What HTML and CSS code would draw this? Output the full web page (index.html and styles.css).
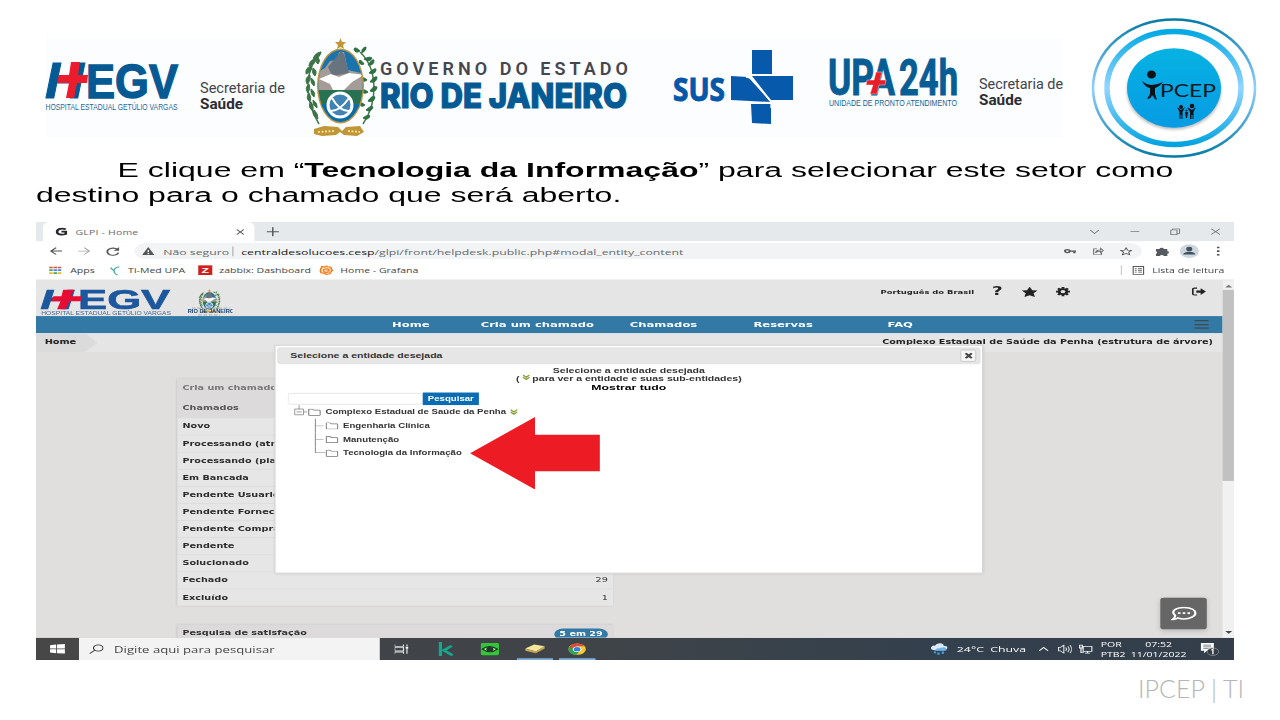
FILE: index.html
```html
<!DOCTYPE html>
<html lang="pt-BR">
<head>
<meta charset="utf-8">
<title>IPCEP | TI</title>
<link rel="stylesheet" href="styles.css">
</head>
<body>
<header class="logos">
  <svg class="logo" width="190" height="155" viewBox="0 0 190 155">
    <path fill="#fcfdff" d="M46 37h144v101H46z"/>
    <g class="arial" font-weight="700" fill="#055a94" stroke="#055a94">
      <text x="45" y="98" font-size="50" font-style="italic" textLength="39" lengthAdjust="spacingAndGlyphs" stroke-width="1">H</text>
      <text x="86" y="98" font-size="49" textLength="92" lengthAdjust="spacingAndGlyphs" stroke-width="1.4">EGV</text>
    </g>
    <path fill="#ec1c2d" d="M71 62h9l-2 13h10l-1 8H77l-3 15h-8l3-15H57l2-8h10z"/>
    <text class="arial" x="45.500" y="109.500" font-size="8.500" fill="#23679c" textLength="132" lengthAdjust="spacingAndGlyphs">HOSPITAL ESTADUAL GETÚLIO VARGAS</text>
  </svg>
  <svg class="logo" width="105" height="155" viewBox="190 0 105 155">
    <path fill="#fcfdff" d="M190 37h105v101H190z"/>
    <g class="roboto" fill="#414349">
      <text x="200" y="93" font-size="15" textLength="85" lengthAdjust="spacingAndGlyphs">Secretaria de</text>
      <text x="200" y="109" font-size="15" font-weight="700" fill="#2c2c32" textLength="43" lengthAdjust="spacingAndGlyphs">Saúde</text>
    </g>
  </svg>
  <svg class="logo" width="345" height="155" viewBox="295 0 345 155">
    <path fill="#fcfdff" d="M295 37h345v101H295z"/>
    <defs>
      <clipPath id="shield"><ellipse cx="340.500" cy="86" rx="22" ry="36"/></clipPath>
      <g id="crest">
        <path d="M321 52C305 68 303 98 319 124M360 52c17 16 19 48 3 72" fill="none" stroke="#46794a" stroke-width="1.500"/>
        <path d="M321 52q-7 1-8 8 7-2 8-8M316 59q-7 1-7 7 6-1 7-7M312 66q-7 1-6 8 6-2 6-8M310 75q-6 3-3 9 4-3 3-9M309 84q-5 4-1 9 3-5 1-9M309 93q-4 5 1 9 2-5-1-9M311 102q-4 5 2 9 1-6-2-9M314 110q-3 5 4 9 0-6-4-9M318 57q3 4 0 7-4-3 0-7M313 68q5 3 2 8-4-3-2-8M311 78q5 3 3 8-4-3-3-8M311 89q5 3 3 8-4-3-3-8M313 100q5 3 4 8-5-3-4-8" fill="#3d7446" stroke="#3d7446"/>
        <path d="M360 51q-5-5-6-2 1 5 6 2M362 53q5-3 4-6-5 1-4 6M364 59q6-3 8-1-2 5-8 1M368 65q4-6 6-5 0 6-6 5M369 73q5-5 7-4 0 6-7 4M370 82q4-6 7-5 0 6-7 5M370 91q4-6 7-4-1 6-7 4M368 101q4-6 7-4-1 6-7 4M366 110q5-5 7-3-2 6-7 3M363 118q5-4 7-2-2 5-7 2M364 64q-3-5-5-3 1 5 5 3M367 80q-4-4-6-1 2 4 6 1M368 92q-5-4-6-1 2 4 6 1M365 105q-5-4-5-1 1 4 5 1" fill="#2d7041" stroke="#2d7041"/>
        <ellipse cx="340.500" cy="86" rx="23.500" ry="37.500" fill="#b99642"/>
        <g clip-path="url(#shield)">
          <path fill="#1973ad" d="M315 48h52v45h-52z"/>
          <path fill="#a39c98" d="M315 74l10-6 5-7 7-1 2-8h5l4 18 17 4v22h-50z"/>
          <path fill="#67747f" d="M337 56l4-5 3 3 5 19-17 3-4-9z"/>
          <path fill="#287153" d="M315 90h52v18h-52z"/>
          <path fill="#076ca9" d="M315 104h52v20h-52z"/>
          <path fill="#fff" d="M319 79l12-5 8 3 10-4 15 2-12 7-8 8h-11l-3-6z"/>
        </g>
        <circle cx="340" cy="105" r="12" fill="#4183b4" stroke="#fff" stroke-width="3"/>
        <path d="M332 98q8 14 18 13M349 98q-9 13-18 13" fill="none" stroke="#fff" stroke-width="2"/>
        <path fill="#c09636" d="M340.500 38l1.500 4h4l-3 3 1 4-3.500-2-3.500 2 1-4-3-3h4zM314 129l10-3 14 1 4 4 4-4 14-1 4 6-7 4-13-1-4-3-4 3-14 1-8-2z"/>
        <path stroke="#f3df9b" stroke-width="2" stroke-dasharray="2 1.500" fill="none" d="M318 132l16-1M348 131l12 1"/>
      </g>
    </defs>
    <use href="#crest"/>
    <text class="roboto" x="380" y="75" font-size="18" font-weight="600" fill="#45464e" textLength="248" lengthAdjust="spacing">GOVERNO DO ESTADO</text>
    <text class="inter" x="380" y="108" font-size="34" font-weight="800" fill="#055a94" stroke="#055a94" stroke-width="1.200" textLength="247" lengthAdjust="spacingAndGlyphs">RIO DE JANEIRO</text>
  </svg>
  <svg class="logo" width="170" height="155" viewBox="640 0 170 155">
    <path fill="#fcfdff" d="M640 37h170v101H640z"/>
    <text class="noto" x="673" y="101" font-size="33" font-weight="700" fill="#0557a8" stroke="#0557a8" textLength="52" lengthAdjust="spacingAndGlyphs">SUS</text>
    <path fill="#0759ab" d="M752 50h20v24h-20zM731 76l17 1 23 25-40-2zM752 76h41v24h-22zM751 104h20v20l-19-1z"/>
    <path stroke="#fff" stroke-width="1.300" fill="none" d="M746 77l5 1 20 24v6"/>
  </svg>
  <svg class="logo" width="155" height="155" viewBox="810 0 155 155">
    <path fill="#fcfdff" d="M810 37h155v101H810z"/>
    <g class="roboto" fill="#075d94" stroke="#075d94" font-weight="700" font-size="50">
      <text x="828" y="95" textLength="67" lengthAdjust="spacingAndGlyphs">UPA</text>
      <text x="899" y="95" textLength="59" lengthAdjust="spacingAndGlyphs">24h</text>
    </g>
    <path fill="#e91e2b" stroke="#fff" stroke-width=".4" d="M876 72h6l-2 8h6l-1 5h-6l-2 9h-7l3-9h-7l1-5h7z"/>
    <text class="arial" x="829" y="106" font-size="9.500" fill="#126496" textLength="128" lengthAdjust="spacingAndGlyphs">UNIDADE DE PRONTO ATENDIMENTO</text>
  </svg>
  <svg class="logo" width="110" height="155" viewBox="965 0 110 155">
    <path fill="#fcfdff" d="M965 37h98v101h-98z"/>
    <g class="roboto" fill="#414349">
      <text x="979" y="89" font-size="15" textLength="84" lengthAdjust="spacingAndGlyphs">Secretaria de</text>
      <text x="979" y="105" font-size="15" font-weight="700" fill="#2c2c32" textLength="43" lengthAdjust="spacingAndGlyphs">Saúde</text>
    </g>
  </svg>
  <svg class="logo ipcep" width="205" height="155" viewBox="1075 0 205 155">
    <defs>
      <linearGradient id="ring" x2="0" y2="1"><stop stop-color="#067ba6"/><stop offset=".5" stop-color="#91d1ff"/><stop offset="1" stop-color="#067ba6"/></linearGradient>
      <linearGradient id="band" x2="0" y2="1"><stop stop-color="#05a9e4"/><stop offset=".5" stop-color="#94d5ff"/><stop offset="1" stop-color="#05a4e0"/></linearGradient>
      <linearGradient id="disc" x2="0" y2="1"><stop stop-color="#06b2e2"/><stop offset="1" stop-color="#079be4"/></linearGradient>
      <filter id="soft"><feGaussianBlur stdDeviation="1.500"/></filter>
    </defs>
    <ellipse cx="1174" cy="88" rx="81" ry="68.500" fill="none" stroke="url(#ring)" stroke-width="2.600"/>
    <ellipse cx="1174" cy="88" rx="67" ry="56.500" fill="none" stroke="url(#band)" stroke-width="5.500"/>
    <ellipse cx="1174" cy="91" rx="47" ry="38.500" fill="#888" filter="url(#soft)" opacity=".6"/>
    <ellipse cx="1174" cy="88" rx="47" ry="39.700" fill="url(#disc)"/>
    <g fill="#0b1116">
      <ellipse cx="1151.500" cy="74.500" rx="4.500" ry="4"/>
      <path d="M1142 81q5 4 10 4t11-3q-4 5-8 6v6l2 6-2-1-3-4q-1 4-5 4l3-5v-6q-5-1-8-7z"/>
      <circle cx="1181" cy="107" r="2"/><circle cx="1192" cy="106" r="2.300"/><circle cx="1186.500" cy="110.500" r="1"/>
      <path d="M1177 107l4 3 4-3-2.500 5v7h-1v-4h-1v4h-1v-7zM1187 107l5 3 4-3-2.500 5v7h-1v-4h-1v4h-1.500v-7zM1185 112h3l-1 6h-1z"/>
    </g>
    <text class="lato" x="1160" y="97" font-size="18" fill="#101820" textLength="56" lengthAdjust="spacingAndGlyphs">PCEP</text>
  </svg>
</header>

<p class="lead"><span class="first">E clique em “<b>Tecnologia da Informação</b>” para selecionar este setor como</span><br>destino para o chamado que será aberto.</p>

<main class="capture">
<div class="screen">
  <div class="tabstrip">
    <div class="tab">
      <svg width="14" height="16" viewBox="0 0 14 16"><path d="M12 4C8 1 2 3 2 8s5 6 10 4V8H7" fill="none" stroke="#26282c" stroke-width="3"/></svg>
      <span class="tab-title">GLPI - Home</span>
      <svg class="tab-close" width="10" height="12" viewBox="0 0 10 12"><path d="M1 2l8 9M9 2l-8 9" stroke="#555" stroke-width="1.500"/></svg>
    </div>
    <svg class="newtab" width="14" height="18" viewBox="0 0 14 18"><path d="M7 1v16M0 9h14" stroke="#555" stroke-width="1.700"/></svg>
    <div class="winctl">
      <svg viewBox="0 0 12 12"><path d="M1 3l5 6 5-6"/></svg>
      <svg viewBox="0 0 12 12"><path d="M1 6h10"/></svg>
      <svg viewBox="0 0 12 12"><path d="M1 3h7v8H1zM3 3V1h8v8H8"/></svg>
      <svg viewBox="0 0 12 12"><path d="M1 1l10 10M11 1L1 11"/></svg>
    </div>
  </div>

  <div class="toolbar">
    <svg class="i14" viewBox="0 0 14 14"><path d="M14 7H1M7 1L1 7l6 6" fill="none" stroke="#555" stroke-width="1.700"/></svg>
    <svg class="i14 fwd" viewBox="0 0 14 14"><path d="M0 7h13M7 1l6 6-6 6" fill="none" stroke="#aaa" stroke-width="1.500"/></svg>
    <svg class="i14 reload" viewBox="0 0 14 14"><path d="M12 4a6 6 0 1 0 1 5" fill="none" stroke="#555" stroke-width="2"/><path fill="#555" d="M14 0v6H8z"/></svg>
    <div class="omnibox">
      <svg width="14" height="16" viewBox="0 0 14 16"><path fill="#555" d="M7 1l7 14H0z"/><path stroke="#fff" stroke-width="1.500" d="M7 6v4M7 11.500v2"/></svg>
      <span class="insecure">Não seguro</span><i class="sep"></i><span class="url"><b>centraldesolucoes.cesp</b>/glpi/front/helpdesk.public.php#modal_entity_content</span>
      <span class="omni-icons">
        <svg width="14" height="14" viewBox="0 0 14 14"><circle cx="4" cy="7" r="2.700" fill="none" stroke="#555" stroke-width="2.200"/><path d="M7 7h7M12 7v4" stroke="#555" stroke-width="2.400"/></svg>
        <svg width="14" height="16" viewBox="0 0 14 16"><path d="M6 4H2v10h9v-3M4 11q1-5 6-5V3l3 4-3 4V8q-4 0-6 3z" fill="none" stroke="#666" stroke-width="1.200"/></svg>
        <svg width="14" height="16" viewBox="0 0 24 24"><path d="M12 2l3 7 8 .8-6 5.500L19 23l-7-4-7 4 2-7.700L1 9.800 9 9z" fill="none" stroke="#555" stroke-width="2"/></svg>
      </span>
    </div>
    <svg class="ext" width="16" height="17" viewBox="0 0 16 16"><path fill="#555a60" d="M1 4h4a2.500 2.500 0 1 1 5 0h4v4a2 2 0 1 1 0 4v4h-4a2.300 2.300 0 0 0-4.500 0H1v-4a2.200 2.200 0 0 0 0-4z"/></svg>
    <svg class="avatar" width="22" height="26" viewBox="0 0 22 26"><ellipse cx="11" cy="13" rx="11" ry="12" fill="#ced6df"/><ellipse cx="11" cy="9.500" rx="3.500" ry="4" fill="#43515f"/><path fill="#43515f" d="M4 19q1-5 7-5t7 5z"/></svg>
    <svg class="dots" width="4" height="16" viewBox="0 0 4 16"><path d="M2 0v3M2 6.500v3M2 13v3" stroke="#555" stroke-width="3"/></svg>
  </div>

  <div class="bookmarks">
    <svg width="14" height="14" viewBox="0 0 14 14"><path fill="#e04d3d" d="M0 0h4v3H0zM5 0h4v3H5zM10 0h4v3h-4z"/><path fill="#47a45a" d="M0 5h4v3H0z"/><path fill="#4285f4" d="M5 5h4v3H5zM10 5h4v3h-4z"/><path fill="#f2b329" d="M0 10h4v3H0zM10 10h4v3h-4z"/><path fill="#47a45a" d="M5 10h4v3H5z"/></svg>
    <span class="bm apps">Apps</span>
    <svg width="12" height="16" viewBox="0 0 12 16"><path d="M1 3l4 6q0 5 4 7M5 8q1-6 6-6" fill="none" stroke="#46ad9e" stroke-width="1.700"/></svg>
    <span class="bm timed">Ti-Med UPA</span>
    <span class="zabbix">Z</span>
    <span class="bm zab">zabbix: Dashboard</span>
    <svg width="16" height="18" viewBox="0 0 16 18"><path d="M8 1l2 2 3 0 1 4 1 2-2 3-1 3-4 1-3-2-3-1-1-4 1-3 1-4 3 1z" fill="#ffe0b0" stroke="#f07a29" stroke-width="1.800"/><path d="M11 12q-5 2-6-2t4-4q3 1 2 4H8" fill="none" stroke="#ef7c2b" stroke-width="1.600"/></svg>
    <span class="bm graf">Home - Grafana</span>
    <span class="reading"><svg width="14" height="16" viewBox="0 0 14 16"><path d="M1 1h12v14H1zM3 5h2M6.500 5H11M3 8h2M6.500 8H11M3 11h2M6.500 11H11" fill="none" stroke="#555" stroke-width="1.400"/></svg><span>Lista de leitura</span></span>
  </div>

  <div class="page">
    <div class="content">
      <div class="apphead">
        <svg width="224" height="63" viewBox="0 0 224 63">
          <g class="arial" font-weight="700" fill="#1d579d" stroke="#1d579d">
            <text x="5" y="51" font-size="48" font-style="italic" textLength="38" lengthAdjust="spacingAndGlyphs">H</text>
            <text x="48" y="51" font-size="47" textLength="105" lengthAdjust="spacingAndGlyphs">EGV</text>
          </g>
          <path fill="#e60c34" d="M31 17h12l-3 11h12l-1 9H38l-4 14H24l4-14H17l3-9h9z"/>
          <text class="arial" x="6" y="61" font-size="10" fill="#43699c" textLength="148" lengthAdjust="spacingAndGlyphs">HOSPITAL ESTADUAL GETÚLIO VARGAS</text>
          <use href="#crest" transform="translate(82 0) scale(.34 .42)"/>
          <text class="arial" x="173" y="58" font-size="10" font-weight="700" fill="#163f79" textLength="53" lengthAdjust="spacingAndGlyphs">RIO DE JANEIRO</text>
          <path d="M178 49h43M185 61h25" stroke="#899" stroke-dasharray="4 2"/>
        </svg>
        <span class="lang">Português do Brasil</span>
        <span class="help">?</span>
        <svg class="fav" width="18" height="19" viewBox="0 0 24 24"><path fill="#222" d="M12 0l4 8 8 1-6 6 2 9-8-4-8 4 2-9-6-6 8-1z"/></svg>
        <svg class="gear" width="16" height="20" viewBox="0 0 20 20"><circle cx="10" cy="10" r="5.500" fill="none" stroke="#222" stroke-width="4"/><path d="M10 0v4M10 16v4M0 10h3M17 10h3M3 3l3 3M14 14l3 3M17 3l-3 3M6 14l-3 3" stroke="#222" stroke-width="4"/></svg>
        <svg class="logout" width="16" height="16" viewBox="0 0 16 16"><path d="M6 2H3q-2 0-2 2v8q0 2 2 2h3" fill="none" stroke="#222" stroke-width="2"/><path fill="#222" d="M5 6h5V2l6 6-6 6v-4H5z"/></svg>
      </div>
      <nav class="menu"><span class="m1">Home</span><span class="m2">Cria um chamado</span><span class="m3">Chamados</span><span class="m4">Reservas</span><span class="m5">FAQ</span><i class="burger"></i></nav>
      <div class="crumbs"><span class="crumb">Home</span><span class="entity">Complexo Estadual de Saúde da Penha (estrutura de árvore)</span></div>
      <div class="tickets">
        <div class="hrow create">Cria um chamado</div>
        <div class="hrow">Chamados</div>
        <div class="row">Novo</div>
        <div class="row">Processando (atribuído)</div>
        <div class="row">Processando (planejado)</div>
        <div class="row">Em Bancada</div>
        <div class="row">Pendente Usuario</div>
        <div class="row">Pendente Fornecedor</div>
        <div class="row">Pendente Compras</div>
        <div class="row">Pendente</div>
        <div class="row">Solucionado</div>
        <div class="row">Fechado<span>29</span></div>
        <div class="row">Excluído<span>1</span></div>
      </div>
      <div class="survey"><span>Pesquisa de satisfação</span><span class="pill">5 em 29</span></div>
      <div class="chat"><svg width="30" height="26" viewBox="0 0 30 26"><path d="M5 16C-1 8 6 2 15 2s13 5 13 10-6 10-13 10q-4 0-7-2-2 3-6 3 3-3 3-7z" fill="none" stroke="#fff" stroke-width="2.500"/><path d="M8 12h3M13.500 12h3M19 12h3" stroke="#fff" stroke-width="3"/></svg></div>
    </div>
    <div class="scroll"><i class="up"></i><i class="thumb"></i><i class="down"></i></div>

    <section class="modal">
      <div class="mtitle"><span>Selecione a entidade desejada</span><span class="mclose"><svg width="9" height="11" viewBox="0 0 9 11"><path d="M1 1l7 9M8 1l-7 9" stroke="#444" stroke-width="3"/></svg></span></div>
      <div class="mintro">
        <div>Selecione a entidade desejada</div>
        <div>( <svg class="chev" width="8" height="11" viewBox="0 0 8 11"><path d="M0 1l4 4 4-4M0 5l4 4 4-4" fill="none" stroke="#8aa33d" stroke-width="2"/></svg> para ver a entidade e suas sub-entidades)</div>
        <div class="all">Mostrar tudo</div>
      </div>
      <div class="msearch"><span class="field"></span><span class="btn">Pesquisar</span></div>
      <div class="tree">
        <div class="node root"><svg width="16" height="24" viewBox="0 0 16 24"><path d="M7 0v7M2 7h10v10H2zM4 12h6M12 12h4" fill="none" stroke="#777"/></svg><svg class="folder" viewBox="0 0 15 13"><path d="M1 2q0-1 1-1h3l2 2h6q1 0 1 1v7q0 1-1 1H2q-1 0-1-1z"/></svg><span>Complexo Estadual de Saúde da Penha</span><svg class="chev" width="8" height="11" viewBox="0 0 8 11"><path d="M0 1l4 4 4-4M0 5l4 4 4-4" fill="none" stroke="#8aa33d" stroke-width="2"/></svg></div>
        <div class="node"><i class="branch"></i><svg class="folder" viewBox="0 0 15 13"><path d="M1 2q0-1 1-1h3l2 2h6q1 0 1 1v7q0 1-1 1H2q-1 0-1-1z"/></svg><span>Engenharia Clínica</span></div>
        <div class="node"><i class="branch"></i><svg class="folder" viewBox="0 0 15 13"><path d="M1 2q0-1 1-1h3l2 2h6q1 0 1 1v7q0 1-1 1H2q-1 0-1-1z"/></svg><span>Manutenção</span></div>
        <div class="node last"><i class="branch"></i><svg class="folder" viewBox="0 0 15 13"><path d="M1 2q0-1 1-1h3l2 2h6q1 0 1 1v7q0 1-1 1H2q-1 0-1-1z"/></svg><span>Tecnologia da Informação</span></div>
      </div>
      <svg class="arrow" width="148" height="127" viewBox="0 0 148 127"><path fill="#ed1c24" d="M0 63.500L74 0v31h74v64H74v32z"/></svg>
    </section>
  </div>

  <div class="taskbar">
    <div class="start"><svg width="17" height="17" viewBox="0 0 17 17"><path fill="#fff" d="M0 2l7-1v7H0zM8 1l9-1v8H8zM0 9h7v7l-7-1zM8 9h9v8l-9-1z"/></svg></div>
    <div class="search"><svg width="16" height="18" viewBox="0 0 16 18"><circle cx="10" cy="7" r="5.500" fill="none" stroke="#333" stroke-width="1.300"/><path d="M6 11l-6 6" stroke="#333" stroke-width="1.500"/></svg><span>Digite aqui para pesquisar</span></div>
    <div class="pinned">
      <span><svg width="16" height="18" viewBox="0 0 16 18"><path d="M0 1v3h10V1M0 17v-3h10v3M0 6h10v6H0zM14 1v3M14 7v10" fill="none" stroke="#ddd" stroke-width="1.400"/><path d="M12.500 5h3v3h-3z" fill="#fff"/></svg></span>
      <span><svg width="17" height="25" viewBox="0 0 17 25"><path d="M2 0v25M15 7L6 15l10 9" fill="none" stroke="#16a58d" stroke-width="4"/></svg></span>
      <span><svg width="21" height="22" viewBox="0 0 21 22"><rect width="21" height="22" rx="3" fill="#35c43a"/><path d="M2 11q8-9 17 0-8 9-17 0z" fill="#c8e8c0" stroke="#173c19" stroke-width="2"/><circle cx="10.500" cy="11" r="4" fill="#203b25"/></svg></span>
      <span class="open"><svg width="24" height="20" viewBox="0 0 24 20"><path fill="#f5e69a" d="M1 9l10-7 12 3-10 9z"/><path fill="#c3a955" d="M1 9v4l12 4v-3zM13 14l10-9v4l-10 8z"/></svg></span>
      <span class="open"><svg width="20" height="22" viewBox="0 0 20 20"><circle cx="10" cy="10" r="10" fill="#f7c92e"/><path fill="#dd4b39" d="M1.300 5A10 10 0 0 1 18.700 5H10L6 12z"/><path fill="#32a350" d="M1.300 5A10 10 0 0 0 9 20l5-8-4 2z"/><circle cx="10" cy="10" r="4.800" fill="#fff"/><circle cx="10" cy="10" r="3.800" fill="#3a7ddd"/></svg></span>
    </div>
    <div class="tray">
      <svg width="20" height="24" viewBox="0 0 20 24"><path fill="#dceaf8" d="M4 14q-5-1-3-6 2-3 4-2 2-6 8-4 2 1 2 4 5 0 4 5-1 3-4 3z"/><path fill="#6eb5ec" d="M6 15q-1-5 5-5 5-3 7 1 1 4-3 4z"/><path d="M5 16v3M9 18v4M14 16v4" stroke="#46a6ec" stroke-width="2.500"/></svg>
      <span class="weather">24°C&nbsp; Chuva</span>
      <svg class="caret" width="12" height="10" viewBox="0 0 12 10"><path d="M1 8l5-6 5 6" fill="none" stroke="#fff" stroke-width="1.400"/></svg>
      <svg class="vol" width="16" height="16" viewBox="0 0 16 16"><path d="M1 5h2l4-4v14l-4-4H1zM9 5q2 3 0 6M11.500 3q3 5 0 10M14 1q4 7 0 14" fill="none" stroke="#eee" stroke-width="1.200"/></svg>
      <svg class="net" width="16" height="18" viewBox="0 0 16 18"><path d="M5 4h10v9H5zM7 16h6M10 13v3M1 2h3v5H1zM2.500 7v8H6" fill="none" stroke="#eee" stroke-width="1.400"/></svg>
      <span class="stack kb"><span>POR</span><span>PTB2</span></span>
      <span class="stack clock"><span>07:52</span><span>11/01/2022</span></span>
      <svg class="notif" width="22" height="26" viewBox="0 0 22 26"><path fill="#fff" d="M0 2h15v14H7l-3 4v-4H0z"/><path d="M3 6h9M3 9h9M3 12h6" stroke="#59636e"/><circle cx="14" cy="17.500" r="6.500" fill="#333b45" stroke="#999"/><path d="M12 15l2-2v9" fill="none" stroke="#fff" stroke-width="1.500"/></svg>
    </div>
  </div>
</div>
</main>
<footer class="foot"><span>IPCEP | TI</span></footer>
</body>
</html>
```
FILE: styles.css
```css
* { box-sizing: border-box; }
body { margin: 0; width: 1280px; height: 720px; overflow: hidden; background: #fff; font-family: "Liberation Sans", Arial, sans-serif; }
svg { display: block; flex: none; }
.arial { font-family: "Liberation Sans", sans-serif; }
.roboto { font-family: Roboto, sans-serif; }
.inter { font-family: Inter, sans-serif; }
.noto { font-family: "Noto Sans", sans-serif; }
.lato { font-family: Lato, sans-serif; }

.logos { display: flex; height: 158px; }
.ipcep { overflow: visible; }

.lead { margin: 0 0 0 36px; height: 64px; width: 760px; font-size: 20px; line-height: 25px; color: #000; white-space: nowrap; transform: scaleX(1.6); transform-origin: 0 0; }
.first { padding-left: 51px; }

.capture { margin-left: 36px; width: 1198px; height: 438px; overflow: hidden; }
.screen { width: 1366px; height: 768px; display: flex; flex-direction: column; transform: scale(.877, .5703); transform-origin: 0 0; font-family: "Open Sans", "Noto Sans", sans-serif; }

.tabstrip { height: 34px; flex: none; background: #e5e9ec; display: flex; align-items: center; padding-left: 8px; }
.tab { width: 241px; height: 34px; background: #fff; border-radius: 8px 8px 0 0; display: flex; align-items: center; padding: 0 11px 0 14px; }
.tab-title { margin-left: 9px; font-size: 12px; color: #66696d; letter-spacing: .2px; }
.tab-close { margin-left: auto; }
.newtab { margin-left: 14px; }
.winctl { margin-left: auto; margin-right: 15px; display: flex; gap: 34px; }
.winctl svg { width: 12px; height: 12px; fill: none; stroke: #777; stroke-width: 1.200; }

.toolbar { height: 34px; flex: none; background: #fff; display: flex; align-items: center; padding-left: 16px; }
.i14 { width: 14px; height: 14px; }
.fwd { margin-left: 18px; }
.reload { margin-left: 18px; width: 15px; height: 15px; }
.omnibox { margin-left: 17px; width: 1149px; height: 28px; border-radius: 14px; background: #f1f3f4; display: flex; align-items: center; padding: 0 11px 0 9px; font-size: 14px; color: #66696d; white-space: nowrap; }
.insecure { margin-left: 10px; width: 74px; }
.sep { width: 1px; height: 17px; background: #999; margin-left: 5px; margin-right: 9px; }
.url b { font-weight: 400; color: #222; }
.omni-icons { margin-left: auto; display: flex; gap: 18px; align-items: center; }
.ext { margin-left: 15px; }
.avatar { margin-left: 12px; }
.dots { margin-left: 20px; }

.bookmarks { height: 34px; flex: none; background: #fff; border-bottom: 1px solid #d9dadb; display: flex; align-items: center; padding-left: 15px; font-size: 12px; color: #44474b; white-space: nowrap; }
.bm.apps { margin-left: 10px; width: 45px; }
.bm.timed { margin-left: 9px; width: 80px; }
.zabbix { width: 16px; height: 17px; background: #cf1f1f; color: #fff; font: 700 14px/17px "Liberation Sans", sans-serif; text-align: center; }
.bm.zab { margin-left: 8px; width: 114px; }
.bm.graf { margin-left: 8px; }
.reading { margin-left: auto; margin-right: 11px; border-left: 1px solid #bbb; height: 17px; padding-left: 12px; display: flex; align-items: center; gap: 9px; }

.page { position: relative; height: 627px; flex: none; display: flex; background: #e1dfdd; overflow: hidden; font-family: "DejaVu Sans", sans-serif; }
.content { width: 1353px; height: 627px; overflow: hidden; position: relative; }
.apphead { height: 63px; background: #e5e5e5; display: flex; color: #222; }
.lang { margin: 14px 0 0 739px; width: 108px; font-size: 9.600px; line-height: 14px; font-weight: 700; white-space: nowrap; }
.help { margin: 9px 0 0 19px; width: 14px; font-size: 21px; line-height: 21px; font-weight: 700; }
.fav { margin: 11px 0 0 20px; }
.gear { margin: 10px 0 0 21px; }
.logout { margin: 12px 0 0 139px; }
.menu { height: 30px; background: #3379a6; color: #fff; font-size: 13.200px; font-weight: 700; line-height: 30px; padding-left: 406px; display: flex; white-space: nowrap; }
.m1 { width: 101px; }
.m2 { width: 170px; }
.m3 { width: 141px; }
.m4 { width: 153px; }
.m5 { width: 350px; }
.burger { width: 16px; height: 15px; margin-top: 7px; border-top: 2px solid #444; border-bottom: 2px solid #444; background: linear-gradient(#444, #444) center / 100% 2px no-repeat; }
.crumbs { height: 33px; background: #e5e5e5; display: flex; justify-content: space-between; font-size: 11px; font-weight: 700; line-height: 31px; color: #222; padding-right: 11px; }
.crumb { width: 70px; height: 33px; padding-left: 10px; background: #dcdbdb; clip-path: polygon(0 0, 56px 0, 70px 50%, 56px 100%, 0 100%); }
.tickets { margin: 47px 0 0 161px; width: 497px; background: #e6e6e6; box-shadow: 0 1px 3px #aaa; font-size: 11px; font-weight: 700; color: #2b2b2b; }
.hrow { height: 34px; line-height: 34px; padding-left: 6px; background: #dcdadb; color: #555; }
.create { color: #777; line-height: 33px; }
.row { height: 30px; line-height: 30px; padding: 0 6px; border-top: 1px solid #d9d9d9; display: flex; justify-content: space-between; white-space: nowrap; }
.row span { font-weight: 400; }
.survey { margin: 33px 0 0 161px; width: 497px; height: 40px; padding: 0 6px; background: #dcdadb; box-shadow: 0 1px 3px #aaa; display: flex; justify-content: space-between; align-items: flex-start; font-size: 11px; font-weight: 700; line-height: 32px; color: #333; }
.pill { margin-top: 7px; height: 20px; width: 61px; border-radius: 10px; background: #3379a6; color: #fff; line-height: 19px; text-align: center; }
.chat { position: absolute; left: 1282px; top: 557px; width: 53px; height: 55px; border-radius: 4px; background: #666; box-shadow: 0 3px 8px #bbb; display: flex; align-items: center; justify-content: center; }
.scroll { width: 13px; height: 627px; background: #f1f1f1; display: flex; flex-direction: column; align-items: center; }
.up { border: 4px solid transparent; border-top: 0; border-bottom: 5px solid #777; margin: 8px 0 4px; }
.thumb { width: 13px; height: 335px; background: #c1c1c1; }
.down { border: 4px solid transparent; border-bottom: 0; border-top: 5px solid #444; margin-top: auto; margin-bottom: 7px; }

.modal { position: absolute; left: 272px; top: 114px; width: 808px; height: 400px; background: #fff; border: 1px solid #c6c6c6; padding: 3px 2px; font-family: "Liberation Sans", sans-serif; font-weight: 700; color: #333; box-shadow: 1px 2px 4px #bbb; }
.mtitle { height: 29px; background: #e6e6e6; border: 1px solid #dedede; border-radius: 4px; display: flex; align-items: center; justify-content: space-between; padding: 0 4px 0 14px; font-size: 12px; }
.mclose { width: 18px; height: 21px; border: 1px solid #bbb; border-radius: 3px; background: #f6f6f6; display: flex; align-items: center; justify-content: center; }
.mintro { margin-top: 4px; text-align: center; font-size: 12px; line-height: 14px; }
.mintro .chev { display: inline-block; }
.all { font-size: 14px; line-height: 18px; color: #000; }
.msearch { display: flex; margin: 0 0 0 12px; height: 22px; }
.field { width: 154px; height: 20px; margin-top: 1px; border: 1px solid #ddd; border-radius: 4px; background: #fff; }
.btn { width: 64px; height: 22px; background: #0a6db3; color: #fff; font-size: 11px; line-height: 22px; text-align: center; }
.tree { font-size: 11px; line-height: 24px; white-space: nowrap; }
.node { height: 24px; display: flex; align-items: center; padding-left: 43px; }
.root { padding-left: 18px; }
.folder { width: 15px; height: 13px; fill: #fff; stroke: #777; stroke-width: 1.200; }
.root .folder { margin-left: 1px; }
.node > span { margin-left: 5px; }
.root .chev { margin-left: 5px; }
.branch { width: 12px; height: 24px; margin-right: 0; border-left: 1px solid #777; background: linear-gradient(90deg, #999, #999) 0 12px / 9px 1px no-repeat; }
.last .branch { height: 12px; margin-bottom: 12px; background: none; border-bottom: 1px solid #888; }
.arrow { position: absolute; left: 222px; top: 125px; }

.taskbar { height: 39px; flex: none; display: flex; background: linear-gradient(90deg, #414346 0, #404448 45%, #33404d 75%, #333e4a 100%); color: #fff; }
.start { width: 49px; background: #474747; display: flex; align-items: center; justify-content: center; }
.search { width: 343px; background: #f3f3f3; color: #444; display: flex; align-items: center; padding-left: 12px; font-size: 15px; }
.search span { margin-left: 12px; }
.pinned { display: flex; }
.pinned span { width: 50px; display: flex; align-items: center; justify-content: center; }
.open { box-shadow: inset 0 -3px #7fb0dc; }
.pinned .open { width: 42px; margin-left: 6px; }
.tray { margin-left: auto; display: flex; align-items: center; font-size: 14px; white-space: nowrap; }
.weather { margin-left: 10px; width: 76px; }
.caret { margin-left: 17px; }
.vol { margin-left: 10px; }
.net { margin-left: 8px; }
.stack { display: flex; flex-direction: column; font-size: 12px; line-height: 17px; text-align: center; }
.kb { margin-left: 9px; width: 27px; text-align: left; }
.clock { margin-left: 9px; width: 60px; align-items: center; }
.notif { margin-left: 18px; margin-right: 16px; }

.foot { display: flex; justify-content: flex-end; padding: 11px 36px 0 0; font: 300 25px/34px Lato, sans-serif; color: #b5b5b5; }
.foot span { transform-origin: 100% 0; }
```
